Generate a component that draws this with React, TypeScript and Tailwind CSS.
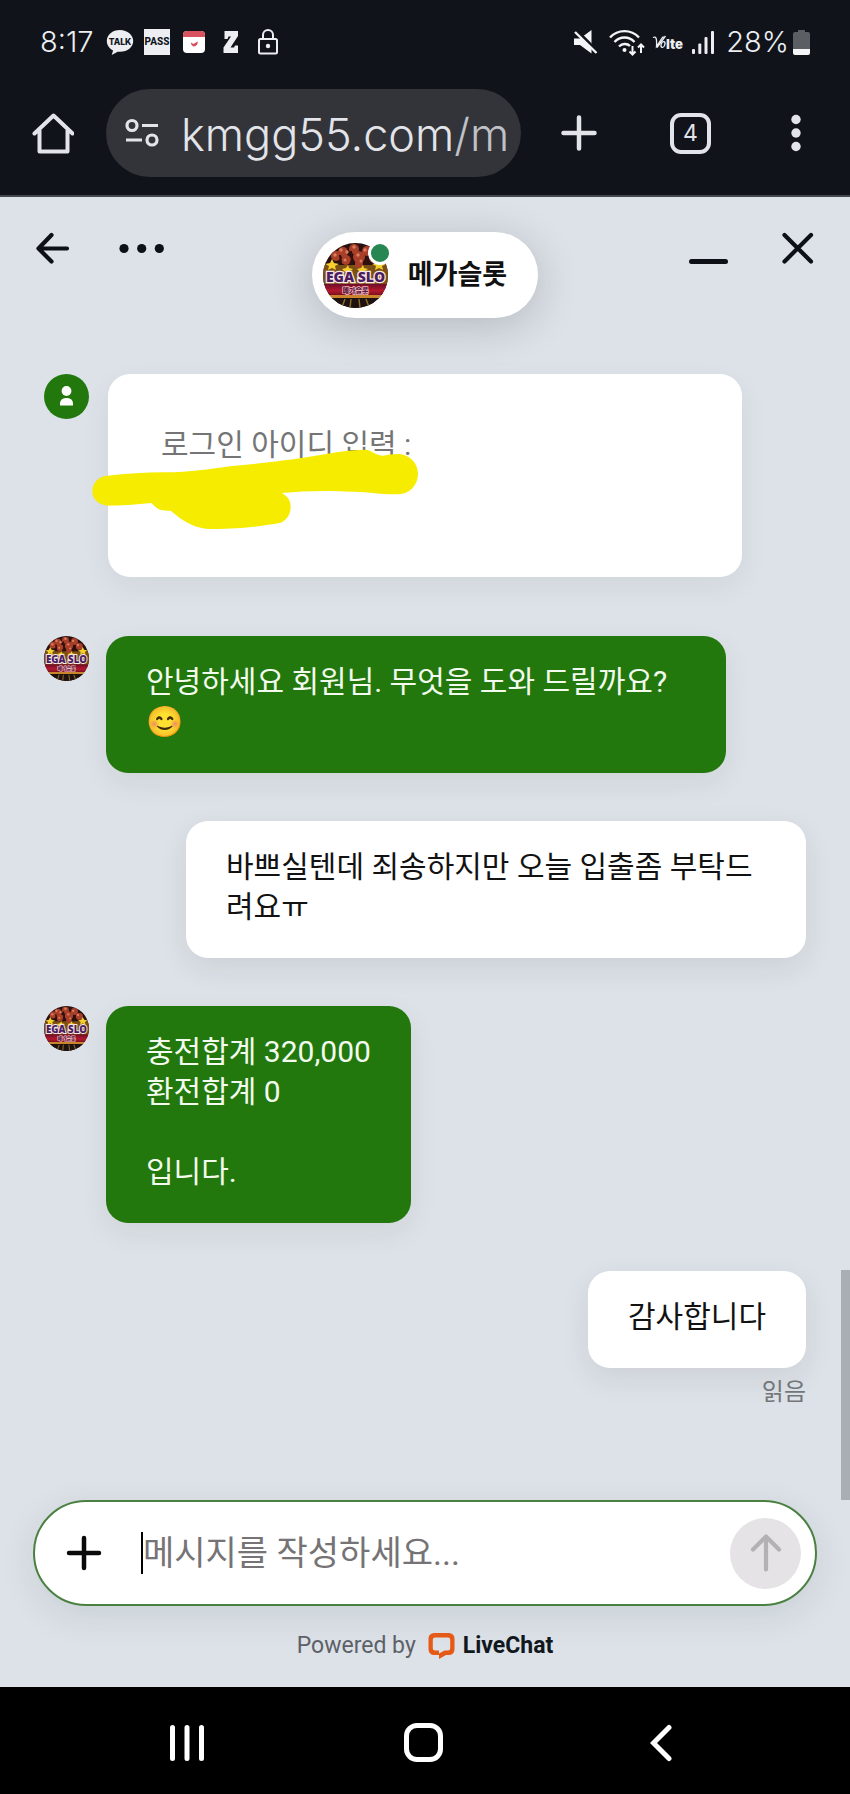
import type { ReactNode } from "react";

function BrandAvatar({ className }: { className: string }) {
  return (
    <svg viewBox="0 0 65 65" className={className} role="img" aria-label="메가슬롯">
      <defs>
        <clipPath id="avatar-clip">
          <circle cx="32.5" cy="32.5" r="32.5" />
        </clipPath>
        <linearGradient id="avatar-ribbon" x1="0" x2="0" y1="0" y2="1">
          <stop offset="0" stopColor="#6d0d2c" />
          <stop offset="0.6" stopColor="#b3182c" />
          <stop offset="1" stopColor="#7e1021" />
        </linearGradient>
      </defs>
      <g clipPath="url(#avatar-clip)">
        <rect width="65" height="65" fill="#2a100e" />
        <path d="M0 22h65v22H0z" fill="#7c4f14" />
        <g fill="#a84029">
          <circle cx="20" cy="9" r="5" />
          <circle cx="31" cy="6" r="5" />
          <circle cx="44" cy="8" r="5" />
          <circle cx="13" cy="13" r="5" />
          <circle cx="23" cy="17" r="5" />
          <circle cx="36" cy="14" r="6" />
          <circle cx="51" cy="15" r="5" />
          <circle cx="36" cy="21" r="4" />
        </g>
        <g fill="#dd7c5f">
          <circle cx="18" cy="7" r="1.700" />
          <circle cx="24" cy="9" r="1.700" />
          <circle cx="31" cy="4" r="1.700" />
          <circle cx="42" cy="7" r="1.700" />
          <circle cx="35" cy="12" r="1.700" />
          <circle cx="38" cy="18" r="1.500" />
          <circle cx="12" cy="12" r="1.700" />
          <circle cx="49" cy="13" r="1.700" />
          <circle cx="22" cy="17" r="1.500" />
        </g>
        <path d="M28 8l1 8-2 6M44 13l-1 9M17 12l1 8" stroke="#35100c" strokeWidth="2" fill="none" />
        <path d="M9 16l2 4 5 1-4 2 1 4-4-2-4 2 1-4-4-2 5-1zM25 22l1 3 4 1-3 2-3 2-3-2-2-2 4-1zM40 22l1 3 4 1-3 2-3 2-3-2-2-2 4-1zM56 16l2 4 5 1-4 2 1 4-4-2-4 2 1-4-4-2 5-1z" fill="#f4cf2d" />
        <rect y="41" width="65" height="11" fill="url(#avatar-ribbon)" />
        <rect y="52" width="65" height="3" fill="#c9852c" />
        <rect y="55" width="65" height="10" fill="#1d1210" />
        <path d="M22 56l-3 8M28 56l-1 9M36 56l1 9M43 56l3 8" stroke="#8b6a2b" strokeWidth="1.5" />
        <text x="32.5" y="39" textAnchor="middle" fontSize="14" fontWeight="800" fill="#4a1d63" stroke="#fbe9e4" strokeWidth="2.600" paintOrder="stroke" className="font-['Open_Sans','Noto_Sans',sans-serif]">
          EGA SLO
        </text>
        <text x="32.5" y="49.5" textAnchor="middle" fontSize="7" fontWeight="900" fill="#5b1846" stroke="#f5b7b4" strokeWidth="1.400" paintOrder="stroke" className="font-['Noto_Sans_CJK_KR',sans-serif]">
          메가슬롯
        </text>
      </g>
    </svg>
  );
}

function StatusBar() {
  return (
    <div className="flex h-[84px] items-center justify-between pl-10 pr-10 font-['Inter',sans-serif] text-[29px] font-light text-[#eceef2]">
      <div className="flex items-center">
        <span className="w-[66px]">8:17</span>
        <svg viewBox="0 0 28 27" className="mr-[10px] h-[27px] w-[28px]" role="img" aria-label="TALK">
          <path d="M14 1C6.400 1 .8 5.800 .8 12c0 4.200 2.600 7.600 6.300 9.400L5.700 26l6-3.300c.8.1 1.500.1 2.300.1 7.600 0 13.200-4.800 13.200-10.800S21.600 1 14 1z" fill="#eceef2" />
          <text x="14" y="15.500" textAnchor="middle" fontSize="8.500" fontWeight="800" fill="#11151c" className="font-['Inter',sans-serif]">TALK</text>
        </svg>
        <span className="mr-[13px] flex size-[26px] items-center justify-center bg-[#eceef2] font-['Roboto',sans-serif] text-[10px] font-extrabold text-[#11151c]">PASS</span>
        <svg viewBox="0 0 22 22" className="mr-[18px] size-[22px]" aria-hidden="true">
          <rect width="22" height="22" rx="4" fill="#fff" />
          <path d="M0 6V4a4 4 0 0 1 4-4h14a4 4 0 0 1 4 4v2z" fill="#d9525f" />
          <path d="M8 11.500l2.500 1.500 4-2.500c.8 2-.8 4.500-3.500 5-1.800-.5-3.200-2-3-4z" fill="#d84a5a" />
        </svg>
        <svg viewBox="0 0 16 22" className="mr-[19px] h-[22px] w-[16px]" aria-hidden="true">
          <path d="M1.500 0H15v5L7.500 16.500H11l1-2h3V22H.5v-5.500L8 5.500H5.500L4.500 8h-3z" fill="#eceef2" />
        </svg>
        <svg viewBox="0 0 20 26" className="h-[26px] w-[20px]" fill="none" stroke="#eceef2" strokeWidth="2" aria-hidden="true">
          <rect x="1" y="10" width="18" height="14.500" rx="1.500" />
          <path d="M5 10V6a5 5 0 0 1 10 0v4" />
          <circle cx="10" cy="17" r="2.200" fill="#eceef2" stroke="none" />
        </svg>
      </div>
      <div className="flex items-center">
        <svg viewBox="0 0 24 24" className="mr-[11px] size-6" aria-hidden="true">
          <path d="M0 8.500h6L17.500 0v23.500L6 15H0z" fill="#f4f5f7" />
          <path d="M2 .5L24.500 23" stroke="#10141b" strokeWidth="4" />
          <path d="M1 2l21.500 21" stroke="#f4f5f7" strokeWidth="2.400" />
        </svg>
        <svg viewBox="0 0 36 27" className="mr-[7px] h-[27px] w-[36px]" fill="none" stroke="#f4f5f7" strokeWidth="2.400" aria-hidden="true">
          <path d="M1 8.500c8-8.500 21-8.500 29 0M5.500 13c5.500-6 14.500-6 20 0M10 17.500c3-3 8-3.500 11-.5" />
          <circle cx="15.500" cy="21" r="2" fill="#f4f5f7" stroke="none" />
          <path d="M23.500 17v8M20.500 22.500l3 3 3-3M32 24v-8M29 18.500l3-3 3 3" strokeWidth="2" />
        </svg>
        <svg viewBox="0 0 34 20" className="mr-[6px] h-[20px] w-[34px]" role="img" aria-label="VoLTE">
          <path d="M1 5.500c3-1.500 4 .5 3.500 9 3-4 4.500-8 7-10M5 15.500L13.500 4" fill="none" stroke="#eceef2" strokeWidth="1.300" />
          <ellipse cx="11" cy="12.500" rx="1.800" ry="3" transform="rotate(20 11 12.500)" fill="none" stroke="#eceef2" strokeWidth="1.300" />
          <text x="14" y="16.500" fontSize="13" fontWeight="900" fill="#eceef2" className="font-['Inter',sans-serif]">lte</text>
        </svg>
        <svg viewBox="0 0 22 23" className="mr-[12px] h-[23px] w-[22px]" fill="#eceef2" aria-hidden="true">
          <rect y="18" width="3" height="5" rx="1" />
          <rect x="6.300" y="12.500" width="3" height="10.500" rx="1" />
          <rect x="12.500" y="6" width="3" height="17" rx="1" />
          <rect x="19" width="3" height="23" rx="1" />
        </svg>
        <span className="mr-1">28%</span>
        <svg viewBox="0 0 17 25" className="h-[25px] w-[17px]" aria-hidden="true">
          <path d="M5 0h7v2h3a2 2 0 0 1 2 2v15H0V4a2 2 0 0 1 2-2h3z" fill="#5b5e63" />
          <path d="M0 19h17v4a2 2 0 0 1-2 2H2a2 2 0 0 1-2-2z" fill="#f4f5f7" />
        </svg>
      </div>
    </div>
  );
}

function BrowserBar() {
  return (
    <nav aria-label="브라우저" className="flex h-[111px] items-start pl-8 pr-10 pt-[5px]">
      <button aria-label="홈" className="flex h-[88px] w-[74px] items-center">
        <svg viewBox="0 0 42 42" className="size-[42px]" fill="none" stroke="#e3e4e9" strokeWidth="4" strokeLinejoin="round" aria-hidden="true">
          <path d="M2.500 21.500L21.500 3.500l19 18M7.500 18.500V39.500h28V18.500" strokeLinecap="round" />
        </svg>
      </button>
      <button aria-label="주소 kmgg55.com/m" className="flex h-[88px] min-w-0 flex-1 items-center overflow-hidden rounded-full bg-[#323439] pl-[19px] text-left font-['Inter',sans-serif] text-[45px] font-light text-[#e3e4e9]">
        <svg viewBox="0 0 34 30" className="mr-[22px] h-[30px] w-[34px] shrink-0" fill="none" stroke="#e3e4e9" strokeWidth="3.200" aria-hidden="true">
          <circle cx="7" cy="7.500" r="5" />
          <circle cx="27" cy="22" r="5" />
          <path d="M17 7.500h16M1 22h16" />
        </svg>
        <span className="pt-[3px]">kmgg55.com<span className="text-[#bfc1c6]">/m</span></span>
      </button>
      <button aria-label="새 탭" className="ml-[38px] flex h-[88px] w-[40px] items-center justify-center">
        <svg viewBox="0 0 36 36" className="size-9" stroke="#e3e4e9" strokeWidth="4.500" strokeLinecap="round" aria-hidden="true">
          <path d="M18 2.500v31M2.500 18h31" />
        </svg>
      </button>
      <button aria-label="탭 4개" className="ml-[71px] mr-[71px] flex h-[88px] w-[41px] items-center">
        <span className="flex size-[41px] items-center justify-center rounded-[11px] border-4 border-[#e3e4e9] font-['Inter',sans-serif] text-[23px] text-[#e3e4e9]">4</span>
      </button>
      <button aria-label="더보기" className="flex h-[88px] w-7 items-center justify-center">
        <svg viewBox="0 0 10 38" className="h-[38px] w-[10px]" fill="#e3e4e9" aria-hidden="true">
          <circle cx="5" cy="5.500" r="4.700" />
          <circle cx="5" cy="19" r="4.700" />
          <circle cx="5" cy="32.500" r="4.700" />
        </svg>
      </button>
    </nav>
  );
}

function ChatHeader() {
  return (
    <header className="grid grid-cols-[1fr_auto_1fr] items-start px-9 pt-[35px]">
      <div className="flex">
        <button aria-label="뒤로" className="h-8 w-[34px]">
          <svg viewBox="0 0 34 32" className="h-8 w-[34px]" fill="none" stroke="#0d1116" strokeWidth="4.200" strokeLinecap="round" strokeLinejoin="round" aria-hidden="true">
            <path d="M31 16.500H2.500M15.500 3L2.500 16.500l13 13" />
          </svg>
        </button>
        <button aria-label="메뉴" className="ml-[49px] h-8 w-[46px]">
          <svg viewBox="0 0 46 32" className="h-8 w-[46px]" fill="#0d1116" aria-hidden="true">
            <circle cx="5" cy="16.500" r="4.600" />
            <circle cx="22.700" cy="16.500" r="4.600" />
            <circle cx="40.300" cy="16.500" r="4.600" />
          </svg>
        </button>
      </div>
      <div className="flex h-[86px] items-center rounded-full bg-white pl-[11px] pr-[31px] shadow-[0_8px_44px_rgba(20,30,30,0.2)]">
        <div className="relative mr-5 size-[65px]">
          <BrandAvatar className="size-[65px]" />
          <span className="absolute -right-1 -top-[2px] size-6 rounded-full border-3 border-white bg-[#278652]" />
        </div>
        <h1 className="text-[27px] font-bold text-[#111]">메가슬롯</h1>
      </div>
      <div className="flex justify-end">
        <button aria-label="최소화" className="mr-[53px] h-8 w-10">
          <svg viewBox="0 0 40 32" className="h-8 w-10" stroke="#0d1116" strokeWidth="5" strokeLinecap="round" aria-hidden="true">
            <path d="M2.500 29.500h34" />
          </svg>
        </button>
        <button aria-label="닫기" className="h-8 w-8">
          <svg viewBox="0 0 32 32" className="size-8" stroke="#0d1116" strokeWidth="4.200" strokeLinecap="round" aria-hidden="true">
            <path d="M2.500 3l26.500 26.500M29 3L2.500 29.500" />
          </svg>
        </button>
      </div>
    </header>
  );
}

function AgentMessage({ children }: { children: ReactNode }) {
  return (
    <div className="flex items-start gap-[17px]">
      <BrandAvatar className="size-[45px] shrink-0" />
      <div className="max-w-[620px] whitespace-pre-line rounded-[22px] bg-[#22780d] px-10 pb-[31px] pt-[26px] text-[#f3fbee] shadow-[0_10px_30px_rgba(30,60,40,0.07)]">
        {children}
      </div>
    </div>
  );
}

function VisitorMessage({ children }: { children: ReactNode }) {
  return (
    <div className="max-w-[620px] self-end rounded-[22px] bg-white px-10 pb-[31px] pt-[26px] text-[#121212] shadow-[0_10px_30px_rgba(30,60,40,0.09)]">
      {children}
    </div>
  );
}

function LoginCard() {
  return (
    <div className="mb-[11px] flex items-start gap-[19px]">
      <svg viewBox="0 0 45 45" className="size-[45px] shrink-0" aria-hidden="true">
        <circle cx="22.500" cy="22.500" r="22.500" fill="#22780d" />
        <circle cx="22.500" cy="17" r="4.900" fill="#fff" />
        <path d="M16 31.500v-2a5.500 5.500 0 0 1 5.500-5.500h2a5.500 5.500 0 0 1 5.500 5.500v2z" fill="#fff" />
      </svg>
      <div className="relative min-h-[203px] max-w-[634px] flex-1 rounded-[22px] bg-white px-[53px] pt-[51px] text-[#757575] shadow-[0_10px_30px_rgba(30,60,40,0.06)]">
        로그인 아이디 입력 :
        <svg viewBox="270 265 990 249" className="absolute -left-[18px] top-[74px] h-[83px] w-[330px]" aria-hidden="true">
          <path
            d="M322 348C390 340 460 336 520 338C600 334 650 325 690 320C780 312 860 302 920 293C980 282 1040 270 1100 270C1120 275 1130 288 1150 288C1170 284 1190 283 1200 283C1235 288 1255 315 1254 345C1252 380 1225 405 1190 404C1150 405 1110 397 1060 396C980 392 910 393 845 400C865 410 873 425 872 445C870 470 855 487 835 491C780 500 720 508 640 508C580 508 545 480 512 453C490 453 475 455 455 430C410 435 360 438 322 438C295 435 277 418 277 395C277 370 295 350 322 348Z"
            fill="#f6ec00"
          />
        </svg>
      </div>
    </div>
  );
}

function Composer() {
  return (
    <form className="mx-[33px] flex h-[106px] items-center rounded-full border-2 border-[#4a8040] bg-white pl-[31px] pr-[14px] shadow-[0_10px_36px_rgba(30,80,50,0.1)]" onSubmit={(e) => e.preventDefault()}>
      <button type="button" aria-label="첨부" className="mr-[39px] size-9 shrink-0">
        <svg viewBox="0 0 36 36" className="size-9" stroke="#0a0a0c" strokeWidth="4.500" strokeLinecap="round" aria-hidden="true">
          <path d="M18 3v30M3 18h30" />
        </svg>
      </button>
      <span className="h-[42px] w-[2px] shrink-0 bg-black" />
      <input aria-label="메시지" placeholder="메시지를 작성하세요..." className="h-[60px] min-w-0 flex-1 bg-transparent text-[34px] leading-[60px] text-[#121212] caret-transparent outline-none placeholder:text-[#757375]" />
      <button type="submit" aria-label="보내기" className="flex size-[71px] shrink-0 items-center justify-center rounded-full bg-[#e5e3e5]">
        <svg viewBox="0 0 32 38" className="h-[38px] w-8" fill="none" stroke="#b3b1b3" strokeWidth="4.200" strokeLinecap="round" strokeLinejoin="round" aria-hidden="true">
          <path d="M16 35.500V2.500M3 15.500l13-13 13 13" />
        </svg>
      </button>
    </form>
  );
}

export default function App() {
  return (
    <div className="flex min-h-screen flex-col bg-[#dde1e8] font-['Roboto','Noto_Sans_CJK_KR',sans-serif] text-[30px] leading-[40px]">
      <div className="border-b-2 border-[#45474d] bg-[#10131a]">
        <StatusBar />
        <BrowserBar />
      </div>
      <ChatHeader />
      <main className="relative flex flex-1 flex-col gap-12 px-11 pt-14">
        <LoginCard />
        <AgentMessage>안녕하세요 회원님. 무엇을 도와 드릴까요? 😊</AgentMessage>
        <VisitorMessage>바쁘실텐데 죄송하지만 오늘 입출좀 부탁드려요ㅠ</VisitorMessage>
        <AgentMessage>{"충전합계 320,000\n환전합계 0\n\n입니다."}</AgentMessage>
        <div className="flex flex-col items-end">
          <VisitorMessage>감사합니다</VisitorMessage>
          <span className="mt-1 text-[24px] text-[#737679]">읽음</span>
        </div>
        <div className="absolute bottom-0 right-0 h-[230px] w-[9px] bg-[#a9aeb4]" />
      </main>
      <Composer />
      <footer className="flex items-center justify-center pb-7 pt-[26px] text-[23px] leading-6 text-[#5d6167]">
        Powered by
        <a href="#livechat" className="ml-3 flex items-center font-bold text-[#10181d]">
          <svg viewBox="0 0 27 27" className="mr-2 size-[27px]" aria-hidden="true">
            <path fillRule="evenodd" d="M6 1h15a5.500 5.500 0 0 1 5.500 5.500v11a5.500 5.500 0 0 1-5.500 5.500h-3l-7 4v-4H6A5.500 5.500 0 0 1 .5 17.500v-11A5.500 5.500 0 0 1 6 1zm1 4.500A2.200 2.200 0 0 0 4.800 7.700v8.600A2.200 2.200 0 0 0 7 18.500h4v3l5.500-3H20a2.200 2.200 0 0 0 2.200-2.200V7.700A2.200 2.200 0 0 0 20 5.500z" fill="#e65a17" />
          </svg>
          LiveChat
        </a>
      </footer>
      <nav aria-label="시스템" className="flex h-[107px] items-center justify-around bg-black pl-[68px] pr-[70px] pt-[4px]">
        <button aria-label="최근 앱" className="flex size-12 items-center justify-center">
          <svg viewBox="0 0 36 38" className="h-[38px] w-9" stroke="#fff" strokeWidth="5" strokeLinecap="round" aria-hidden="true">
            <path d="M3.500 3.500v31M18 3.500v31M32.500 3.500v31" />
          </svg>
        </button>
        <button aria-label="홈 화면" className="flex size-12 items-center justify-center">
          <span className="size-[39px] rounded-[13px] border-5 border-white" />
        </button>
        <button aria-label="이전" className="flex size-12 items-center justify-center">
          <svg viewBox="0 0 22 38" className="h-[38px] w-[22px]" fill="none" stroke="#fff" strokeWidth="5" strokeLinecap="round" aria-hidden="true">
            <path d="M19 3.500L3.500 19 19 34.500" />
          </svg>
        </button>
      </nav>
    </div>
  );
}
